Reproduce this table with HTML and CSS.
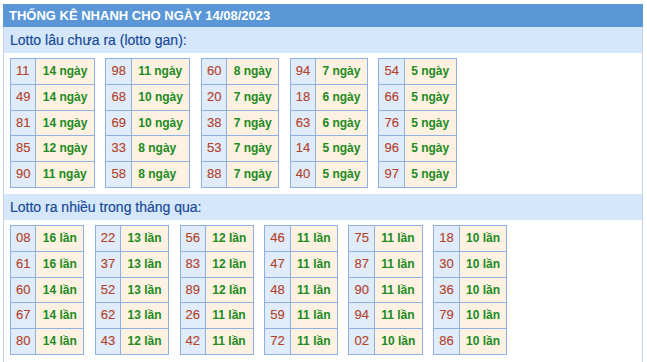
FILE: index.html
```html
<!DOCTYPE html>
<html lang="vi">
<head>
<meta charset="utf-8">
<title>Thống kê nhanh</title>
<link rel="stylesheet" href="styles.css">
</head>
<body>
<div class="box">
  <div class="head">THỐNG KÊ NHANH CHO NGÀY 14/08/2023</div>
  <div class="inner">
    <div class="title">Lotto lâu chưa ra (lotto gan):</div>
    <div class="tables">
      <div class="tbl">
        <div class="n">11</div><div class="v">14 ngày</div>
        <div class="n">49</div><div class="v">14 ngày</div>
        <div class="n">81</div><div class="v">14 ngày</div>
        <div class="n">85</div><div class="v">12 ngày</div>
        <div class="n">90</div><div class="v">11 ngày</div>
      </div>
      <div class="tbl">
        <div class="n">98</div><div class="v">11 ngày</div>
        <div class="n">68</div><div class="v">10 ngày</div>
        <div class="n">69</div><div class="v">10 ngày</div>
        <div class="n">33</div><div class="v">8 ngày</div>
        <div class="n">58</div><div class="v">8 ngày</div>
      </div>
      <div class="tbl">
        <div class="n">60</div><div class="v">8 ngày</div>
        <div class="n">20</div><div class="v">7 ngày</div>
        <div class="n">38</div><div class="v">7 ngày</div>
        <div class="n">53</div><div class="v">7 ngày</div>
        <div class="n">88</div><div class="v">7 ngày</div>
      </div>
      <div class="tbl">
        <div class="n">94</div><div class="v">7 ngày</div>
        <div class="n">18</div><div class="v">6 ngày</div>
        <div class="n">63</div><div class="v">6 ngày</div>
        <div class="n">14</div><div class="v">5 ngày</div>
        <div class="n">40</div><div class="v">5 ngày</div>
      </div>
      <div class="tbl">
        <div class="n">54</div><div class="v">5 ngày</div>
        <div class="n">66</div><div class="v">5 ngày</div>
        <div class="n">76</div><div class="v">5 ngày</div>
        <div class="n">96</div><div class="v">5 ngày</div>
        <div class="n">97</div><div class="v">5 ngày</div>
      </div>
    </div>
    <div class="title">Lotto ra nhiều trong tháng qua:</div>
    <div class="tables">
      <div class="tbl">
        <div class="n">08</div><div class="v">16 lần</div>
        <div class="n">61</div><div class="v">16 lần</div>
        <div class="n">60</div><div class="v">14 lần</div>
        <div class="n">67</div><div class="v">14 lần</div>
        <div class="n">80</div><div class="v">14 lần</div>
      </div>
      <div class="tbl">
        <div class="n">22</div><div class="v">13 lần</div>
        <div class="n">37</div><div class="v">13 lần</div>
        <div class="n">52</div><div class="v">13 lần</div>
        <div class="n">62</div><div class="v">13 lần</div>
        <div class="n">43</div><div class="v">12 lần</div>
      </div>
      <div class="tbl">
        <div class="n">56</div><div class="v">12 lần</div>
        <div class="n">83</div><div class="v">12 lần</div>
        <div class="n">89</div><div class="v">12 lần</div>
        <div class="n">26</div><div class="v">11 lần</div>
        <div class="n">42</div><div class="v">11 lần</div>
      </div>
      <div class="tbl">
        <div class="n">46</div><div class="v">11 lần</div>
        <div class="n">47</div><div class="v">11 lần</div>
        <div class="n">48</div><div class="v">11 lần</div>
        <div class="n">59</div><div class="v">11 lần</div>
        <div class="n">72</div><div class="v">11 lần</div>
      </div>
      <div class="tbl">
        <div class="n">75</div><div class="v">11 lần</div>
        <div class="n">87</div><div class="v">11 lần</div>
        <div class="n">90</div><div class="v">11 lần</div>
        <div class="n">94</div><div class="v">11 lần</div>
        <div class="n">02</div><div class="v">10 lần</div>
      </div>
      <div class="tbl">
        <div class="n">18</div><div class="v">10 lần</div>
        <div class="n">30</div><div class="v">10 lần</div>
        <div class="n">36</div><div class="v">10 lần</div>
        <div class="n">79</div><div class="v">10 lần</div>
        <div class="n">86</div><div class="v">10 lần</div>
      </div>
    </div>
  </div>
</div>
</body>
</html>
```
FILE: styles.css
```css
html, body {
  margin: 0;
  padding: 0;
  background: #ffffff;
}
body {
  font-family: "Liberation Sans", Arial, sans-serif;
}
.box {
  margin: 4px 4px 0 3px;
  width: 640px;
  height: 358px;
  display: flex;
  flex-direction: column;
}
.head {
  height: 23px;
  line-height: 23px;
  background: #5b97d6;
  color: #ffffff;
  font-weight: bold;
  font-size: 13px;
  padding-left: 6px;
}
.inner {
  flex: 1;
  border-left: 1px solid #c6d3e4;
  border-right: 1px solid #c6d3e4;
}
.title {
  height: 26px;
  line-height: 26px;
  background: #d5e8fb;
  color: #1c4a98;
  font-size: 14px;
  padding-left: 6px;
  -webkit-text-stroke: 0.2px #1c4a98;
}
.tables {
  display: flex;
  gap: 10.7px;
  padding: 5px 0 5px 6px;
}
.tables + .title {
  margin-top: 1px;
}
.tbl {
  display: grid;
  grid-template-columns: auto auto;
  grid-auto-rows: 24.8px;
  gap: 1px;
  padding: 1px;
  background: #8fb0e2;
}
.n {
  background: #e1ecfb;
  color: #b3432b;
  font-size: 13px;
  line-height: 24.8px;
  padding: 0 5px;
  -webkit-text-stroke: 0.15px #b3432b;
}
.v {
  background: #fdf2e2;
  color: #218a21;
  font-size: 12px;
  font-weight: bold;
  line-height: 24.8px;
  padding: 0 6.3px;
}
```
